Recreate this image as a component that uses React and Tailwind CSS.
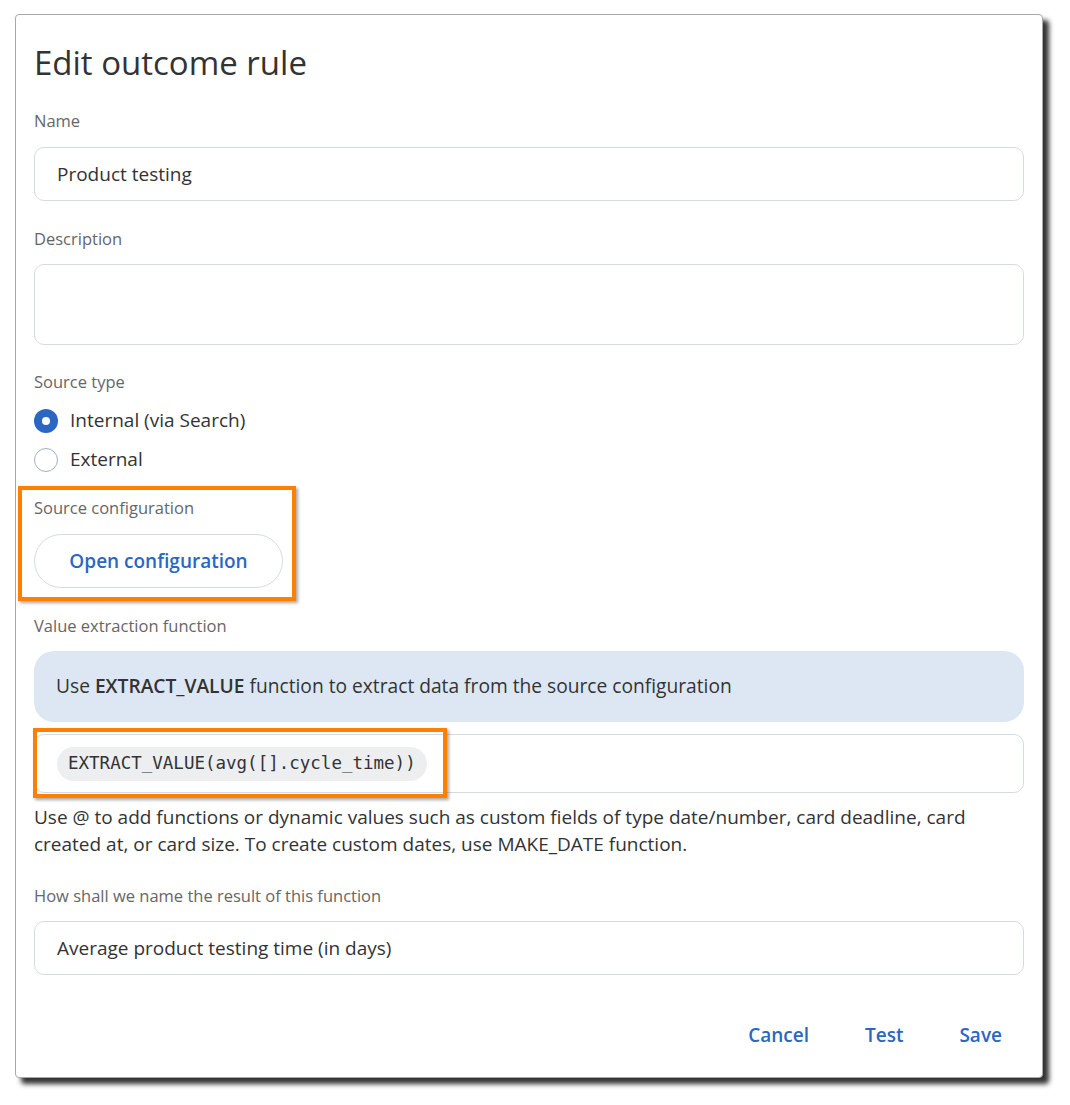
import { useState } from "react";

function Label({ children }) {
  return <div className="text-[16.5px] text-[#666] leading-5">{children}</div>;
}

function Radio({ checked, label, onClick }) {
  return (
    <button type="button" onClick={onClick} className="flex items-center gap-3 h-[39px]">
      {checked ? (
        <span className="w-6 h-6 rounded-full bg-[#2c66c3] flex items-center justify-center">
          <span className="w-2 h-2 rounded-full bg-white" />
        </span>
      ) : (
        <span className="w-6 h-6 rounded-full border border-[#9fb0bf] bg-white" />
      )}
      <span className="text-[19px] text-[#333]">{label}</span>
    </button>
  );
}

function App() {
  const [source, setSource] = useState("internal");

  return (
    <div className="min-h-screen bg-white pt-[14px] pl-[15px]" style={{ fontFamily: '"Open Sans", sans-serif' }}>
      <div className="w-[1028px] h-[1064px] bg-white border border-[#a8a8a8] rounded-sm shadow-[6px_6px_5px_rgba(0,0,0,0.8)] px-[18px] flex flex-col">
        <h1 className="text-[33px] text-[#333] leading-[40px] mt-[28px]">Edit outcome rule</h1>

        <div className="mt-[28px]">
          <Label>Name</Label>
          <div className="mt-[16px] h-[54px] border border-[#d3dce3] rounded-[10px] flex items-center px-[22px] text-[19px] text-[#333]">
            Product testing
          </div>
        </div>

        <div className="mt-[28px]">
          <Label>Description</Label>
          <div className="mt-[15px] h-[81px] border border-[#d3dce3] rounded-[10px]" />
        </div>

        <div className="mt-[27px]">
          <Label>Source type</Label>
          <div className="mt-[9px] flex flex-col items-start">
            <Radio checked={source === "internal"} label="Internal (via Search)" onClick={() => setSource("internal")} />
            <Radio checked={source === "external"} label="External" onClick={() => setSource("external")} />
          </div>
        </div>

        <div className="relative mt-[19px] w-fit">
          <Label>Source configuration</Label>
          <button className="mt-[16px] h-[54px] w-[249px] rounded-full border border-[#d3dce3] bg-white text-[19px] font-semibold text-[#2c66c3]">
            Open configuration
          </button>
          <div className="pointer-events-none absolute -left-[16px] -top-[12px] w-[278px] h-[115px] border-4 border-[#ff7f00] shadow-[2px_2px_3px_rgba(0,0,0,0.35)]" />
        </div>

        <div className="mt-[28px]">
          <Label>Value extraction function</Label>
          <div className="mt-[15px] h-[71px] rounded-[20px] bg-[#dde7f3] flex items-center px-[22px] text-[19.2px] text-[#333]">
            <span>
              Use <span className="font-semibold">EXTRACT_VALUE</span> function to extract data from the source configuration
            </span>
          </div>
          <div className="relative mt-[12px] h-[59px] border border-[#d3dce3] rounded-[10px] flex items-center px-[22px]">
            <span className="h-[34px] px-[11px] rounded-full bg-[#eceef0] flex items-center text-[17.5px] text-[#333]" style={{ fontFamily: '"DejaVu Sans Mono", monospace' }}>
              EXTRACT_VALUE(avg([].cycle_time))
            </span>
            <div className="pointer-events-none absolute -left-[2px] -top-[7px] w-[414px] h-[70px] border-4 border-[#ff7f00] shadow-[2px_2px_3px_rgba(0,0,0,0.35)]" />
          </div>
          <p className="mt-[11px] text-[19px] leading-[27px] text-[#333]">
            Use @ to add functions or dynamic values such as custom fields of type date/number, card deadline, card created at, or card size. To create custom dates, use MAKE_DATE function.
          </p>
        </div>

        <div className="mt-[28px]">
          <Label>How shall we name the result of this function</Label>
          <div className="mt-[15px] h-[54px] border border-[#d3dce3] rounded-[10px] flex items-center px-[22px] text-[19px] text-[#333]">
            Average product testing time (in days)
          </div>
        </div>

        <div className="mt-auto mb-[28px] flex justify-end items-center pr-[22px] gap-[56px] text-[19px] font-semibold text-[#2c66c3]">
          <button>Cancel</button>
          <button>Test</button>
          <button>Save</button>
        </div>
      </div>
    </div>
  );
}

export default App;
